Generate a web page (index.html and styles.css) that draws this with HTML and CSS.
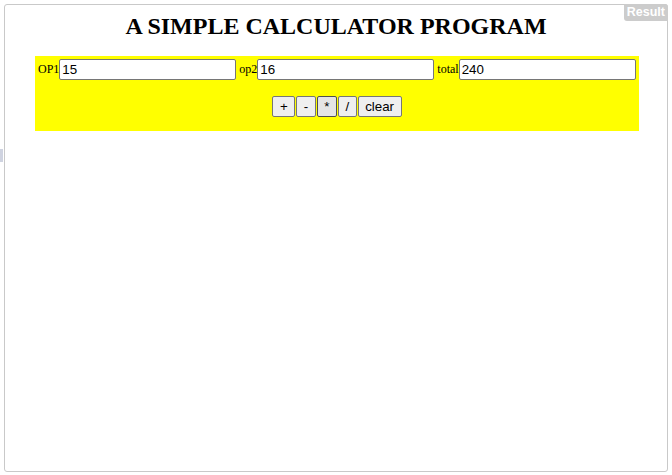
FILE: index.html
```html
<!DOCTYPE html>
<html>
<head>
<meta charset="utf-8">
<title>A Simple Calculator Program</title>
<link rel="stylesheet" href="styles.css">
</head>
<body>
<div class="handle"></div>
<div class="frame">
  <div class="badge">Result</div>
  <h1 class="title">A SIMPLE CALCULATOR PROGRAM</h1>
  <div class="calc">
    <div class="fields">OP1<input class="field" type="text" value="15"> op2<input class="field" type="text" value="16"> total<input class="field" type="text" value="240"></div>
    <div class="ops">
      <button class="btn">+</button>
      <button class="btn">-</button>
      <button class="btn btn-active">*</button>
      <button class="btn">/</button>
      <button class="btn">clear</button>
    </div>
  </div>
</div>
</body>
</html>
```

FILE: styles.css
```css
html, body {
  margin: 0;
  padding: 0;
  background: #ffffff;
}

body {
  position: relative;
  font-family: "Liberation Serif", "Times New Roman", serif;
  padding: 4px;
  height: 475px;
  box-sizing: border-box;
}

.handle {
  position: absolute;
  left: 0;
  top: 149px;
  width: 3px;
  height: 13px;
  background: #cfd3e0;
}

.frame {
  position: relative;
  box-sizing: border-box;
  width: 664px;
  height: 468px;
  border: 1px solid #c9c9c9;
  border-radius: 3px;
  padding: 8px;
}

.badge {
  position: absolute;
  top: -1px;
  right: -1px;
  background: #cccccc;
  color: #ffffff;
  font-family: "Liberation Sans", Arial, sans-serif;
  font-weight: bold;
  font-size: 12.5px;
  line-height: 17px;
  padding: 0 3px;
  border-radius: 0 3px 0 3px;
}

.title {
  margin: 0 0 16px 0;
  font-size: 24px;
  font-weight: bold;
  text-align: center;
  color: #000000;
  line-height: 27px;
}

.calc {
  margin-left: 22px;
  width: 604px;
  height: 75px;
  box-sizing: border-box;
  background: #ffff00;
  padding: 3px 3px 0 3px;
}

.fields {
  font-size: 12px;
  line-height: 21px;
  height: 21px;
  white-space: nowrap;
}

.field {
  box-sizing: border-box;
  width: 177px;
  height: 21px;
  margin: 0;
  padding: 1px 2px;
  border: 1px solid #767676;
  border-radius: 2px;
  font-family: "Liberation Sans", Arial, sans-serif;
  font-size: 13.33px;
  vertical-align: top;
  background: #ffffff;
  color: #000000;
}

.ops {
  display: flex;
  justify-content: center;
  gap: 1px;
  margin-top: 16px;
}

.btn {
  box-sizing: border-box;
  height: 21px;
  margin: 0;
  padding: 1px 6.5px;
  border: 1px solid #767676;
  border-radius: 2px;
  background: #efefef;
  color: #000000;
  font-family: "Liberation Sans", Arial, sans-serif;
  font-size: 13.33px;
  line-height: 17px;
}

.btn-active {
  background: #e5e5e5;
  border-color: #4f4f4f;
}
```
